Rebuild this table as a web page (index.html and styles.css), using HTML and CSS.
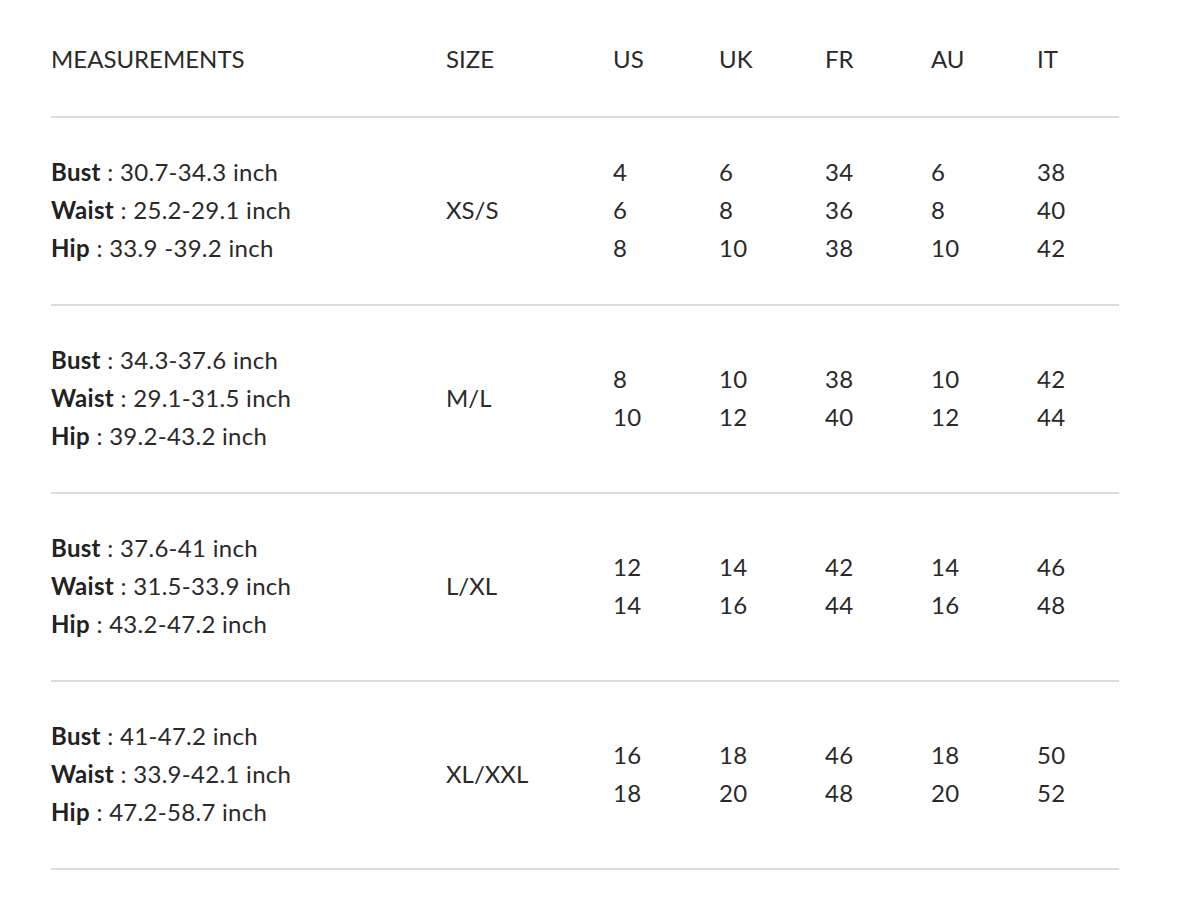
FILE: index.html
```html
<!DOCTYPE html>
<html>
<head>
<meta charset="utf-8">
<link rel="stylesheet" href="styles.css">
</head>
<body>
<div class="chart">
  <div class="row head">
    <div class="cell">MEASUREMENTS</div>
    <div class="cell">SIZE</div>
    <div class="cell">US</div>
    <div class="cell">UK</div>
    <div class="cell">FR</div>
    <div class="cell">AU</div>
    <div class="cell">IT</div>
  </div>
  <div class="row">
    <div class="cell"><b>Bust</b> : 30.7-34.3 inch<br><b>Waist</b> : 25.2-29.1 inch<br><b>Hip</b> : 33.9 -39.2 inch</div>
    <div class="cell size">XS/S</div>
    <div class="cell">4<br>6<br>8</div>
    <div class="cell">6<br>8<br>10</div>
    <div class="cell">34<br>36<br>38</div>
    <div class="cell">6<br>8<br>10</div>
    <div class="cell">38<br>40<br>42</div>
  </div>
  <div class="row">
    <div class="cell"><b>Bust</b> : 34.3-37.6 inch<br><b>Waist</b> : 29.1-31.5 inch<br><b>Hip</b> : 39.2-43.2 inch</div>
    <div class="cell size">M/L</div>
    <div class="cell">8<br>10</div>
    <div class="cell">10<br>12</div>
    <div class="cell">38<br>40</div>
    <div class="cell">10<br>12</div>
    <div class="cell">42<br>44</div>
  </div>
  <div class="row">
    <div class="cell"><b>Bust</b> : 37.6-41 inch<br><b>Waist</b> : 31.5-33.9 inch<br><b>Hip</b> : 43.2-47.2 inch</div>
    <div class="cell size">L/XL</div>
    <div class="cell">12<br>14</div>
    <div class="cell">14<br>16</div>
    <div class="cell">42<br>44</div>
    <div class="cell">14<br>16</div>
    <div class="cell">46<br>48</div>
  </div>
  <div class="row">
    <div class="cell"><b>Bust</b> : 41-47.2 inch<br><b>Waist</b> : 33.9-42.1 inch<br><b>Hip</b> : 47.2-58.7 inch</div>
    <div class="cell size">XL/XXL</div>
    <div class="cell">16<br>18</div>
    <div class="cell">18<br>20</div>
    <div class="cell">46<br>48</div>
    <div class="cell">18<br>20</div>
    <div class="cell">50<br>52</div>
  </div>
</div>
</body>
</html>
```

FILE: styles.css
```css
html, body {
  margin: 0;
  padding: 0;
  background: #fff;
}
body {
  font-family: Lato, "Noto Sans", sans-serif;
  font-size: 24px;
  color: #2a2a2a;
}
.chart {
  width: 1068px;
  margin-left: 51px;
}
.row {
  display: grid;
  grid-template-columns: 395px 167px 106px 106px 106px 106px 1fr;
  align-items: center;
  line-height: 38px;
  padding: 35px 0 37px;
  border-bottom: 2px solid #dcdcdc;
  letter-spacing: 0.3px;
}
.row.head {
  padding: 40px 0 38px;
  letter-spacing: 0;
}
.cell.size {
  letter-spacing: 0;
}
.cell b {
  font-weight: 700;
  color: #222;
}
```
